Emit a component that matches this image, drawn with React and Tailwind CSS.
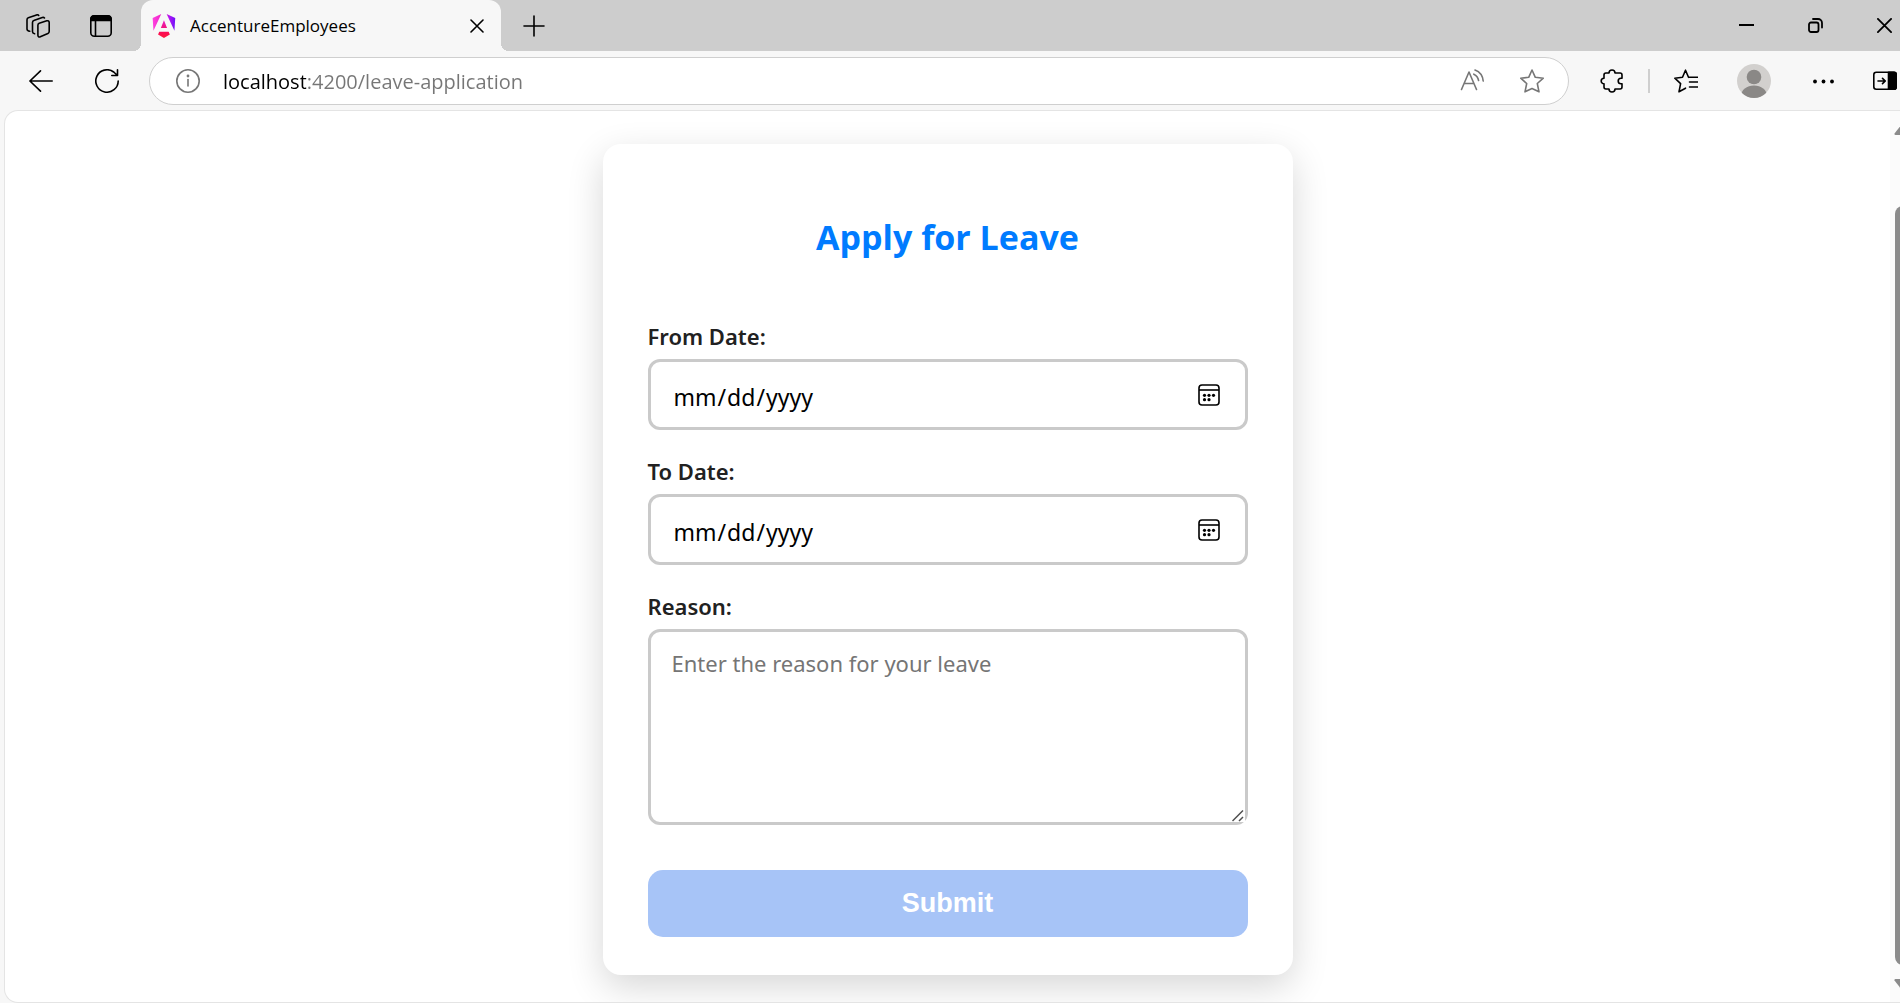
import { useState } from "react";

const line = { fill: "none", stroke: "currentColor", strokeLinecap: "round", strokeLinejoin: "round" };

function Icon({ children, className = "size-6", viewBox = "0 0 24 24", strokeWidth = 1.6 }) {
  return (
    <svg aria-hidden="true" viewBox={viewBox} className={className} {...line} strokeWidth={strokeWidth}>
      {children}
    </svg>
  );
}

function IconButton({ label, children, className = "" }) {
  return (
    <button type="button" aria-label={label} className={`shrink-0 ${className}`}>
      {children}
    </button>
  );
}

function AngularLogo() {
  return (
    <svg aria-hidden="true" viewBox="0 0 223 236" className="size-6 shrink-0">
      <defs>
        <linearGradient id="ng" x1="0" y1="60" x2="223" y2="60" gradientUnits="userSpaceOnUse">
          <stop offset="0" stopColor="#ff41e0" />
          <stop offset="0.5" stopColor="#e91bc0" />
          <stop offset="0.75" stopColor="#b013f5" />
          <stop offset="1" stopColor="#6a12f8" />
        </linearGradient>
        <linearGradient id="ngBase" x1="111" y1="60" x2="111" y2="236" gradientUnits="userSpaceOnUse">
          <stop offset="0" stopColor="#e420c8" />
          <stop offset="0.7" stopColor="#fb0c54" />
          <stop offset="1" stopColor="#ff1a3c" />
        </linearGradient>
      </defs>
      <path fill="url(#ng)" d="m222.077 39.192-8.019 125.923L137.387 0l84.69 39.192ZM7.937 165.115 0 39.192 84.69 0 7.937 165.115Z" />
      <path fill="url(#ngBase)" d="m168.972 202.017-57.933 33.056-57.934-33.056 11.783-28.556h92.301l11.783 28.556ZM111.039 62.675l30.357 73.803H80.681l30.358-73.803Z" />
    </svg>
  );
}

function TabStrip() {
  return (
    <header className="flex h-[51px] items-stretch bg-[#cdcdcd]">
      <div className="flex items-center gap-[39px] pr-[28px] pl-[26px]">
        <IconButton label="Workspaces">
          <Icon>
            <path d="M13.2 9.2l7.6-2.4c1.3-.4 2.4.3 2.4 1.6v9.2c0 .9-.5 1.6-1.3 2l-7.6 3.2c-1.3.5-2.4-.2-2.4-1.5v-10c0-1 .4-1.7 1.3-2.1z" />
            <path d="M8.6 19.8C7.500 19.600 6.500 19 6.500 17.800V8.600c0-1 .4-1.700 1.300-2l8.500-3.100c.9-.3 1.700-.1 2.200.5" />
            <path d="M3.800 17.200C2 17 1 16.300 1 15V5.700c0-1 .400-1.700 1.300-2L10.500.900c.9-.3 1.700-.1 2.200.5" />
          </Icon>
        </IconButton>
        <IconButton label="Tab actions menu">
          <Icon>
            <rect x="1.800" y="1.800" width="20.400" height="20.400" rx="3.500" />
            <path d="M1.800 6.500V5a3.500 3.500 0 0 1 3.500-3.200h13.400A3.500 3.500 0 0 1 22.200 5v1.500z" fill="currentColor" />
            <path d="M6.500 7v15" />
          </Icon>
        </IconButton>
      </div>
      <div className="flex items-end">
        <span className="-ml-2 size-2 bg-[radial-gradient(circle_at_0_0,transparent_8px,#f7f7f7_8px)]" />
        <div className="flex h-[51px] w-[360px] items-center rounded-t-xl bg-[#f7f7f7] pr-[17px] pl-[11px]">
          <AngularLogo />
          <span className="ml-[14px] flex-1 font-['Open_Sans','Noto_Sans',sans-serif] text-[17px] text-black">AccentureEmployees</span>
          <IconButton label="Close tab">
            <Icon className="size-[14px]" viewBox="0 0 14 14"><path d="M1 1l12 12M13 1L1 13" /></Icon>
          </IconButton>
        </div>
        <span className="size-2 bg-[radial-gradient(circle_at_100%_0,transparent_8px,#f7f7f7_8px)]" />
      </div>
      <IconButton label="New tab" className="ml-[14px]">
        <Icon className="size-[22px]" viewBox="0 0 22 22"><path d="M11 1v20M1 11h20" /></Icon>
      </IconButton>
      <div className="ml-auto flex items-center gap-[54px] pr-2">
        <IconButton label="Minimize">
          <Icon className="size-[15px]" viewBox="0 0 15 15" strokeWidth={2}><path d="M0 7h15" strokeLinecap="butt" /></Icon>
        </IconButton>
        <IconButton label="Restore">
          <Icon className="size-[15px]" viewBox="0 0 15 15" strokeWidth={1.8}>
            <rect x="1" y="4.500" width="9.500" height="9.500" rx="2" />
            <path d="M5 1h5a4 4 0 0 1 4 4v4.500" />
          </Icon>
        </IconButton>
        <IconButton label="Close window">
          <Icon className="size-[15px]" viewBox="0 0 15 15" strokeWidth={1.8}><path d="M.9.9l13.200 13.200M14.100.9L.9 14.100" /></Icon>
        </IconButton>
      </div>
    </header>
  );
}

function Toolbar() {
  const [url, setUrl] = useState("localhost:4200/leave-application");
  return (
    <nav aria-label="Browser toolbar" className="flex items-center bg-[#f7f7f7] pt-[6px] pr-[3px] pb-[5px] pl-[29px]">
      <IconButton label="Back">
        <Icon><path d="M23.200 12H1M11.500 1.800L.9 12l10.600 10.200" /></Icon>
      </IconButton>
      <IconButton label="Refresh" className="ml-[42px]">
        <Icon><path d="M23.200 12a11.200 11.200 0 1 1-4.500-9M22.500.8v5.700h-5.700M22.500 6.500L18.700 3" /></Icon>
      </IconButton>
      <div className="ml-[30px] flex h-12 min-w-0 flex-1 items-center rounded-full border border-[#cfcfcf] bg-white pr-6 pl-[26px] text-[#767676]">
        <IconButton label="View site information">
          <Icon><circle cx="12" cy="12" r="11.200" /><path d="M12 10.500v6.500" /><circle cx="12" cy="7" r=".6" fill="currentColor" /></Icon>
        </IconButton>
        <input
          aria-label="Address bar"
          value={url}
          onChange={(e) => setUrl(e.target.value)}
          className="ml-[23px] min-w-0 flex-1 bg-[linear-gradient(90deg,#000_83px,#767676_83px)] bg-clip-text pt-[2px] font-['Open_Sans','Noto_Sans',sans-serif] text-[20px] text-transparent caret-black outline-none"
        />
        <div className="flex items-center gap-9">
          <IconButton label="Read aloud">
            <Icon><path d="M1.500 20.500L9 3l7.500 17.500M4.200 14.500h9.600M13.800 5.200c2.500 1.200 4.300 3.300 4.800 6.300M15 1c4.600 1.700 7.700 5.800 8.200 11" /></Icon>
          </IconButton>
          <IconButton label="Add to favorites">
            <Icon><path d="M12 1l3.300 7.300 8 .900-6 5.300 1.700 8.300L12 19.500l-7 3.300 1.700-8.300-6-5.300 8-.9z" /></Icon>
          </IconButton>
        </div>
      </div>
      <div className="ml-[31px] flex items-center gap-6 text-black">
        <IconButton label="Extensions">
          <Icon><path d="M4 9.200V6a2 2 0 0 1 2-2h3a3 3 0 0 1 6 0h5a2 2 0 0 1 2 2v3.200h-1a2.800 2.800 0 0 0 0 5.600h1V18a2 2 0 0 1-2 2h-5a3 3 0 0 1-6 0H6a2 2 0 0 1-2-2v-3.200a2.800 2.800 0 0 1 0-5.600z" /></Icon>
        </IconButton>
        <span className="h-6 w-[2px] bg-[#cfcfcf]" />
        <IconButton label="Favorites">
          <Icon><path d="M14.500 8.300L11.500 1.200 8.500 8.300.8 9.200l5.800 5.400L5 22.800l6.500-3.600M23.500 8.300h-9M23.500 13h-8M23.500 18h-8" /></Icon>
        </IconButton>
      </div>
      <div className="ml-[39px] flex items-center gap-[39px]">
        <IconButton label="Profile">
          <svg aria-hidden="true" viewBox="0 0 34 34" className="size-[34px]">
            <clipPath id="av"><circle cx="17" cy="17" r="17" /></clipPath>
            <g clipPath="url(#av)">
              <rect width="34" height="34" fill="#d2d0ce" />
              <circle cx="17" cy="13" r="7.300" fill="#8a8886" />
              <ellipse cx="17" cy="32" rx="13" ry="10.500" fill="#8a8886" />
            </g>
          </svg>
        </IconButton>
        <IconButton label="Settings and more">
          <svg aria-hidden="true" viewBox="0 0 24 24" className="size-6"><circle cx="5" cy="12.500" r="1.900" /><circle cx="13.500" cy="12.500" r="1.900" /><circle cx="22" cy="12.500" r="1.900" /></svg>
        </IconButton>
        <IconButton label="Sidebar">
          <Icon>
            <rect x=".8" y="3.300" width="22.400" height="17" rx="2.500" />
            <path d="M15.500 3.300h5.700a2 2 0 0 1 2 2v13a2 2 0 0 1-2 2h-5.700z" fill="currentColor" />
            <path d="M5 12h7M9.500 9.300L12.300 12l-2.800 2.700" />
          </Icon>
        </IconButton>
      </div>
    </nav>
  );
}

function CalendarIcon() {
  return (
    <svg aria-hidden="true" viewBox="0 0 22 22" className="pointer-events-none absolute top-[25px] right-[28px] size-[22px]" fill="none" stroke="#000" strokeWidth="1.600">
      <rect x="1" y="1" width="20" height="20" rx="3" />
      <path d="M1 6h20" />
      <g fill="#000" stroke="none">
        <circle cx="6.500" cy="11.300" r="1.600" /><circle cx="11" cy="11.300" r="1.600" /><circle cx="15.500" cy="11.300" r="1.600" />
        <circle cx="6.500" cy="15.700" r="1.600" /><circle cx="11" cy="15.700" r="1.600" />
      </g>
    </svg>
  );
}

const labelClass = "mb-[6px] block text-[22px] leading-[34px] font-semibold text-[#212121]";

function DateField({ id, label }) {
  return (
    <div className="mb-6">
      <label htmlFor={id} className={labelClass}>{label}</label>
      <div className="relative">
        <input
          id={id}
          type="date"
          className="block h-[71px] w-full rounded-xl border-3 border-[#cacaca] bg-white px-[22px] pt-[5px] text-[23px] text-black [&::-webkit-calendar-picker-indicator]:opacity-0"
        />
        <CalendarIcon />
      </div>
    </div>
  );
}

function LeaveForm() {
  return (
    <form
      onSubmit={(e) => e.preventDefault()}
      className="w-full max-w-[690px] rounded-[18px] bg-white px-[45px] pt-[68px] pb-[38px] font-['Noto_Sans','Open_Sans',sans-serif] shadow-[0_12px_36px_rgba(0,0,0,0.16)]"
    >
      <h2 className="mb-[57px] text-center font-['Open_Sans','Noto_Sans',sans-serif] text-[34px] leading-[50px] font-bold text-[#007bff]">Apply for Leave</h2>
      <DateField id="from-date" label="From Date:" />
      <DateField id="to-date" label="To Date:" />
      <label htmlFor="reason" className={labelClass}>Reason:</label>
      <div className="relative">
        <textarea
          id="reason"
          placeholder="Enter the reason for your leave"
          className="block h-[196px] w-full resize-y rounded-xl border-3 border-[#cacaca] bg-white px-[21px] py-[15px] text-[22px] leading-[32px] text-black placeholder:text-[#757575] [&::-webkit-resizer]:bg-white"
        />
        <svg aria-hidden="true" viewBox="0 0 12 12" className="pointer-events-none absolute right-[4px] bottom-[3px] size-3" fill="none" stroke="#505050" strokeWidth="1.500">
          <path d="M.5 11L11 .5M7 11l4-4" />
        </svg>
      </div>
      <button
        type="submit"
        disabled
        className="mt-[45px] h-[67px] w-full rounded-[15px] bg-[#a7c4f7] font-['Liberation_Sans',sans-serif] text-[27px] font-bold text-white"
      >
        Submit
      </button>
    </form>
  );
}

function ScrollBar() {
  return (
    <div aria-hidden="true" className="flex w-[10px] shrink-0 flex-col items-start overflow-hidden bg-[#fbfbfb] pt-[13px] pb-3 pl-1">
      <svg viewBox="0 0 16 11" className="h-[11px] w-4 shrink-0"><path d="M8 0l7.500 9.500q.3 1.500-1 1.500h-13q-1.300 0-1-1.500z" fill="#8b8b8b" /></svg>
      <div className="mt-[71px] mb-[14px] ml-px w-4 flex-1 rounded-l-[8px] bg-[#8b8b8b]" />
      <svg viewBox="0 0 16 11" className="h-[11px] w-4 shrink-0"><path d="M8 11L.5 1.500Q.2 0 1.500 0h13q1.300 0 1 1.500z" fill="#8b8b8b" /></svg>
    </div>
  );
}

export default function App() {
  return (
    <div className="flex min-h-screen flex-col overflow-hidden bg-[#f7f7f7]">
      <TabStrip />
      <Toolbar />
      <main className="ml-1 flex flex-1 overflow-hidden rounded-l-[14px] border-y border-l border-[#e4e4e4] bg-white">
        <div className="flex flex-1 items-start justify-center pt-[33px] pb-[26px]">
          <LeaveForm />
        </div>
        <ScrollBar />
      </main>
    </div>
  );
}
